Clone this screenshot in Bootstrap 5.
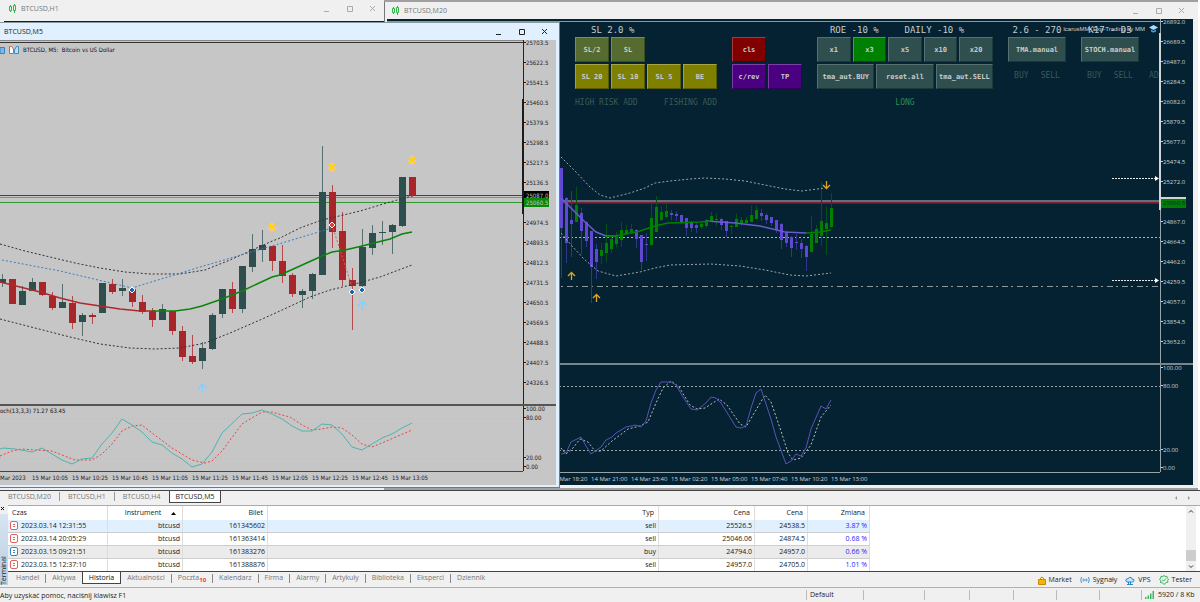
<!DOCTYPE html>
<html lang="pl">

<head>
    <meta charset="UTF-8">
    <meta name="viewport" content="width=device-width, initial-scale=1.0">
    <title>BTCUSD,M5</title>
    <link href="https://cdn.jsdelivr.net/npm/bootstrap@5.3.0/dist/css/bootstrap.min.css" rel="stylesheet">
    <script src="https://cdn.jsdelivr.net/npm/bootstrap@5.3.0/dist/js/bootstrap.bundle.min.js"></script>
    <style>
        body {
            font: 7px/12px "Open Sans", "Noto Sans", sans-serif;
            color: #1c1c1c;
            background: #f0f0f0;
        }

        a { color: inherit; text-decoration: none; }
        button { border: 0; background: none; padding: 0; color: inherit; }
        svg { display: block; }

        /* windows */
        .workspace { background: #a0a0a0; min-height: 0; border-right: 2px solid #fff; }
        .win { position: absolute; background: #f0f0f0; }
        .win-h1 { left: 0; top: 0; width: 384px; bottom: 0; }
        .win-m20 { left: 384px; right: 0; top: 2px; bottom: 2px; border-left: 1px solid #777; padding: 0 5px 3px 2px; }
        .win-m5 { left: 0; top: 22px; width: 560px; bottom: 2px; background: #e0f0ff; padding: 0 3px 2px 0; border-top: 1px solid #8a98a0; border-right: 1px solid #777; border-bottom: 1px solid #777; }
        .win-title { height: 17px; color: #777; padding-left: 4px; }
        .win-title button { width: 23px; height: 17px; color: #aaa; }
        .win-title svg { margin: 0 auto; }
        .win-m5 .win-title, .win-m5 .win-title button { color: #222; }
        .dark-strip { height: 4px; background: #042231; margin-left: 4px; }

        /* charts */
        .chart { background: #c6c6c6; min-height: 0; }
        .chart-dark { background: #042231; color: #d0d4d6; }
        .plot { position: relative; overflow: hidden; min-width: 0; }
        .plot > svg { width: 100%; height: 100%; position: absolute; }
        .axis, .times, .chart-name { font: 6px/6px "DejaVu Sans Condensed", "Liberation Sans", sans-serif; }
        .chart-dark .axis, .chart-dark .times { font-family: "Open Sans", sans-serif; }
        .axis { position: relative; width: 33px; border-left: 1px solid #222; }
        .axis div { height: 20px; white-space: nowrap; }
        .axis div::before { content: ""; display: inline-block; width: 2px; height: 1px; background: currentColor; vertical-align: 2px; }
        .chart-dark .axis { border-color: #9aa3a8; }
        .axis .tag { position: absolute; left: 0; width: 25px; height: 9px; line-height: 9px; padding-left: 2px; color: #c6c6c6; }
        .axis .tag::before { display: none; }
        .range { position: absolute; left: -2px; width: 2px; background: currentColor; }
        .pane-sub { border-top: 2px solid #555; }
        .chart-dark .pane-sub { border-color: #77868c; }
        .m5-sub { height: 67px; }
        .m20-sub { height: 109px; }
        .m5-sub .axis div:nth-child(1) { height: 9px; }
        .m5-sub .axis div:nth-child(2) { height: 40px; }
        .m5-sub .axis div:nth-child(3) { height: 9px; }
        .m5-sub .axis div:nth-child(4) { height: 6px; }
        .m20-sub .axis div:nth-child(1) { height: 18px; }
        .m20-sub .axis div:nth-child(2) { height: 64px; }
        .m20-sub .axis div:nth-child(3) { height: 18px; }
        .m20-sub .axis div:nth-child(4) { height: 6px; }
        .times { height: 14px; overflow: hidden; white-space: nowrap; border-top: 1px solid #444; margin-right: 33px; }
        .times span { flex: 0 0 40px; padding-top: 3px; }
        .chart-dark .times { border-color: #9aa3a8; height: 13px; }
        .m20-times { padding-left: 164px; }
        .m5-times span:first-child { flex-basis: 32px; }
        .chart-name { position: absolute; left: 0; top: 6px; color: #111; }
        .osc-name { position: absolute; left: 0; top: 1px; font: 6px/8px "DejaVu Sans Condensed", "Liberation Sans", sans-serif; color: #111; }

        /* trading panel */
        .panel { position: absolute; top: 4px; right: 5px; gap: 15px; font-family: "DejaVu Sans Mono", monospace; white-space: nowrap; }
        .panel-head { font-size: 9px; height: 14px; line-height: 14px; color: #c8cccc; }
        .panel-row { gap: 2px; margin-bottom: 2px; height: 25px; }
        .panel-row button, .dim { flex: 1 1 0; }
        .panel-row button {
            font-size: 7px;
            font-weight: 700;
            color: #c8cccc;
            background: #2f4f4f;
            border: 1px solid;
            border-color: #55706f #1d3838 #1d3838 #55706f;
        }
        .panel-row .b-sl { background: #556b2f; border-color: #7b8f55 #3c4d20 #3c4d20 #7b8f55; }
        .panel-row .b-olive { background: #808000; border-color: #a3a340 #5a5a00 #5a5a00 #a3a340; }
        .panel-row .b-cls { background: #800000; border-color: #a83a3a #500000 #500000 #a83a3a; }
        .panel-row .b-violet { background: #4b0082; border-color: #7a3fa5 #300058 #300058 #7a3fa5; }
        .panel-row .b-on { background: #008000; border-color: #40a540 #005000 #005000 #40a540; }
        .dim { font-size: 8px; line-height: 23px; color: #3a5a5a; }
        .long { color: #2e8b57; }
        .g-a { width: 142px; }
        .g-b { width: 70px; padding-top: 14px; }
        .g-c { width: 176px; }
        .g-d { width: 58px; }
        .half { width: 70px; }
        .third { width: 34px; }
        .g-f { width: 6px; padding-top: 41px; margin-left: -5px; }
        .expert { position: absolute; top: 6px; right: 2px; font: 6px/8px "Liberation Sans", sans-serif; }

        /* chart tabs */
        .chart-tabs { height: 15px; border-top: 1px solid #444; color: #777; }
        .chart-tabs a { padding: 0 8px; border-right: 1px solid #999; height: 9px; margin-top: 1px; line-height: 9px; }
        .chart-tabs a.now { border: 1px solid #444; border-top: 0; background: #fff; color: #222; height: 12px; margin: 0; padding: 0 6px; line-height: 11px; }
        .chart-tabs a.before-now { border-right: 0; }

        /* terminal */
        .terminal { height: 82px; }
        .side { width: 8px; }
        .side-bar { background: linear-gradient(#b8cee4, #d7e4f1); writing-mode: vertical-rl; transform: rotate(180deg); line-height: 8px; margin-bottom: 2px; }
        .term-body { background: #fff; border-top: 1px solid #aaa; border-bottom: 1px solid #444; overflow: hidden; height: 67px; }
        .deals { width: 862px; table-layout: fixed; border-collapse: separate; border-spacing: 0; color: #222; }
        .deals th, .deals td { height: 13px; padding: 0 2px; line-height: 12px; text-align: right; border-right: 1px solid #ddd; font-weight: 400; white-space: nowrap; vertical-align: middle; }
        .deals th { height: 14px; line-height: 14px; padding: 0 4px; }
        .deals th:nth-child(1), .deals td:nth-child(1) { text-align: left; }
        .deals td:nth-child(1) { padding-left: 2px; }
        .deals td { border-bottom: 1px solid #ccc; }
        .deals th:nth-child(2) { padding-right: 6px; }
        .deals .sel { background: #e0f0ff; }
        .deals .alt { background: #ebebeb; }
        .deals td:last-child { color: #2a1fff; }
        .deals td svg { display: inline-block; vertical-align: -2px; margin-right: 3px; }
        .scroller { width: 10px; background: #f0f0f0; margin-right: 4px; }
        .thumb { height: 11px; width: 10px; background: #cdcdcd; }
        .term-tabs a { padding: 0 6px; border-right: 1px solid #888; line-height: 8px; height: 9px; color: #777; margin-top: 2px; }
        .term-tabs a:last-child, .term-tabs a.before-now { border: 0; }
        .term-tabs a.now { background: #fff; border: 1px solid #444; border-top: 0; height: 12px; margin-top: 0; line-height: 12px; color: #111; }
        .term-tabs sub { color: #f33; font-size: 6px; bottom: -2px; line-height: 0; font-weight: 700; }
        .services { gap: 8px; padding-right: 8px; margin-top: 2px; }
        .services a { gap: 3px; }
        .status { height: 15px; border-top: 1px solid #b0b0b0; line-height: 15px; }
        .status div + div { border-left: 1px solid #bbb; margin: 2px 0; line-height: 10px; padding-left: 3px; }
    </style>
</head>

<body class="vh-100 d-flex flex-column overflow-hidden">

    <main class="workspace position-relative flex-grow-1 overflow-hidden">

        <section class="win win-h1">
            <div class="win-title d-flex align-items-center">
                <svg class="mx-0 me-1 ms-1" width="9" height="9" viewBox="0 0 9 9" fill="none" stroke="#2db84b"><path d="M1.500 2.500h2v4h-2zM2.500 1v1.500M2.500 6.500V8M5.500 1.500h2v5h-2zM6.500 0v1.500M6.500 6.500V9" /></svg>
                <span class="me-auto">BTCUSD,H1</span>
                <button aria-label="Minimalizuj"><svg width="7" height="7" stroke="currentColor"><path d="M1 6.500h5" /></svg></button>
                <button aria-label="Maksymalizuj"><svg width="7" height="7" fill="none" stroke="currentColor"><path d="M1.500 1.500h5v5h-5z" /></svg></button>
                <button aria-label="Zamknij"><svg width="7" height="7" stroke="currentColor"><path d="M1 1l5 5M6 1L1 6" /></svg></button>
            </div>
            <div class="dark-strip mt-1"></div>
        </section>

        <section class="win win-m20 d-flex flex-column">
            <div class="win-title d-flex align-items-center">
                <svg class="mx-0 me-1" width="9" height="9" viewBox="0 0 9 9" fill="none" stroke="#2db84b"><path d="M1.500 2.500h2v4h-2zM2.500 1v1.500M2.500 6.500V8M5.500 1.500h2v5h-2zM6.500 0v1.500M6.500 6.500V9" /></svg>
                <span class="me-auto">BTCUSD,M20</span>
                <button aria-label="Minimalizuj"><svg width="7" height="7" stroke="currentColor"><path d="M1 6.500h5" /></svg></button>
                <button aria-label="Maksymalizuj"><svg width="7" height="7" fill="none" stroke="currentColor"><path d="M1.500 1.500h5v5h-5z" /></svg></button>
                <button aria-label="Zamknij"><svg width="7" height="7" stroke="currentColor"><path d="M1 1l5 5M6 1L1 6" /></svg></button>
            </div>
            <div class="chart chart-dark d-flex flex-column flex-grow-1">
                <div class="d-flex flex-grow-1">
                    <div class="plot flex-grow-1">
                        <svg>
                            <g transform="translate(-387 -19)" fill="none">
                                <path d="M387 21.500H3000" stroke="#8b989d" />
                                <path d="M387 201H3000" stroke="#5f7080" stroke-width="2" />
                                <path d="M387 202.500H3000" stroke="#7a2030" />
                                <path d="M387 203.500H3000" stroke="#0a4a1a" />
                                <path d="M387 237.500H3000" stroke="#aeb6ba" stroke-dasharray="2 2" />
                                <path d="M387 286.500H3000" stroke="#8e999e" stroke-dasharray="6 3 2 4" />
                                <path d="M1112 178.500H1156M1112 280.500H1156" stroke="#e8e8e8" stroke-dasharray="2 1" />
                                <path d="M1155 176l4 2.500-4 2.500zM1155 278l4 2.500-4 2.500z" fill="#fff" />
                                <g id="m20-candles"></g>
                                <path d="M561 157L575 171 590 187 600 195 610 198 630 193 645 188 655 183 670 181 690 179 705 178 725 179 745 181 765 185 785 189 802 191 825 188M561 233L572 246 584 259 598 271 616 276 640 272 655 268 670 265 711 264 740 266 765 270 790 275 806 276 831 273" stroke="#9ba5aa" stroke-dasharray="2 2" />
                                <path d="M561 198L573 210 585 222 596 232 606 236 616 236M706 221L735 223 760 226 785 232 806 233" stroke="#6a5acd" stroke-width="1.500" />
                                <path d="M606 237L621 235 640 231 655 226 668 223 700 222 711 221M806 233L820 232 831 230" stroke="#008000" stroke-width="1.500" />
                                <path d="M571.500 280v-7M568 276l3.500-3.500 3.500 3.500M596.500 302v-7M593 298l3.500-3.500 3.500 3.500M826.500 181v7M823 185l3.500 3.500 3.500-3.500" stroke="#daa520" stroke-width="1.300" />
                            </g>
                        </svg>
                        <div class="expert d-flex">
                            <span>IcarusMM_Exp-Trading by MM</span>
                            <svg class="ms-1" width="9" height="8"><path d="M0 2.500L4.500 0 9 2.500 4.500 5z" fill="#a8dcff" /><path d="M2 4.500v2q2.500 2 5 0v-2L4.500 6z" fill="#3fa0e0" /></svg>
                        </div>
                        <div class="panel d-flex">
                            <div class="g-a">
                                <div class="panel-head ps-3">SL 2.0 %</div>
                                <div class="panel-row d-flex half"><button class="b-sl">SL/2</button><button class="b-sl">SL</button></div>
                                <div class="panel-row d-flex"><button class="b-olive">SL 20</button><button class="b-olive">SL 10</button><button class="b-olive">SL 5</button><button class="b-olive">BE</button></div>
                                <div class="dim d-flex justify-content-between"><span>HIGH RISK ADD</span><span>FISHING ADD</span></div>
                            </div>
                            <div class="g-b">
                                <div class="panel-row d-flex third"><button class="b-cls">cls</button></div>
                                <div class="panel-row d-flex"><button class="b-violet">c/rev</button><button class="b-violet">TP</button></div>
                            </div>
                            <div class="g-c">
                                <div class="panel-head d-flex justify-content-around"><span>ROE -10 %</span><span class="me-3">DAILY -10 %</span></div>
                                <div class="panel-row d-flex"><button>x1</button><button class="b-on">x3</button><button>x5</button><button>x10</button><button>x20</button></div>
                                <div class="panel-row d-flex"><button>tma_aut.BUY</button><button>reset.all</button><button>tma_aut.SELL</button></div>
                                <div class="dim long text-center">LONG</div>
                            </div>
                            <div class="g-d">
                                <div class="panel-head text-center">2.6 - 270</div>
                                <div class="panel-row d-flex"><button>TMA.manual</button></div>
                                <div class="dim d-flex justify-content-around"><span>BUY</span><span>SELL</span></div>
                            </div>
                            <div class="g-d">
                                <div class="panel-head text-center">K17 - D3</div>
                                <div class="panel-row d-flex"><button>STOCH.manual</button></div>
                                <div class="dim d-flex justify-content-around"><span>BUY</span><span>SELL</span></div>
                            </div>
                            <div class="g-f dim overflow-visible">ADD</div>
                        </div>
                    </div>
                    <div class="axis flex-shrink-0" id="m20-axis">
                        <span class="range" style="top: 14px; height: 177px"></span>
                    </div>
                </div>
                <div class="pane-sub m20-sub d-flex">
                    <div class="plot flex-grow-1">
                        <svg>
                            <g transform="translate(-387 -365)" fill="none">
                                <path d="M387 386.500H3000M387 450.500H3000" stroke="#9ba5aa" stroke-dasharray="2 2" />
                                <path d="M561 448L566 454 573 448 580 439 588 442 595 451 601 451 612 441 628 429 640 426 648 422 656 403 663 388 671 381 679 387 690 405 697 409 705 408 719 399 727 405 740 424 746 427 756 410 765 395 771 402 781 431 788 453 793 460 801 458 811 445 821 417 831 405" stroke="#b8bec2" stroke-dasharray="2 2" />
                                <path d="M561 454L566 453 571 442 581 437 586 446 591 454 601 447 606 440 612 437 616 433 626 427 636 425 641 427 646 421 651 403 656 390 661 382 671 382 676 385 683 397 691 409 697 410 706 403 711 397 716 398 721 403 736 427 741 428 746 426 751 408 756 393 761 389 771 419 776 437 786 464 791 461 796 454 801 456 806 448 811 429 821 406 826 409 831 400" stroke="#5a52b5" />
                            </g>
                        </svg>
                    </div>
                    <div class="axis flex-shrink-0">
                        <div>100.00</div>
                        <div>80.00</div>
                        <div>20.00</div>
                        <div>0.00</div>
                    </div>
                </div>
                <div class="times m20-times d-flex" id="m20-times"></div>
            </div>
        </section>

        <section class="win win-m5 d-flex flex-column">
            <div class="win-title d-flex align-items-center">
                <span class="me-auto">BTCUSD,M5</span>
                <button aria-label="Minimalizuj"><svg width="7" height="7" stroke="currentColor"><path d="M1 6.500h5" /></svg></button>
                <button aria-label="Maksymalizuj"><svg width="7" height="7" fill="none" stroke="currentColor"><path d="M1.500 1.500h5v5h-5z" /></svg></button>
                <button aria-label="Zamknij"><svg width="7" height="7" stroke="currentColor"><path d="M1 1l5 5M6 1L1 6" /></svg></button>
            </div>
            <div class="chart d-flex flex-column flex-grow-1">
                <div class="d-flex flex-grow-1">
                    <div class="plot flex-grow-1">
                        <svg>
                            <g transform="translate(0 -40)" fill="none">
                                <path d="M0 40.500H900" stroke="#888" />
                                <path d="M0 42.500H900" stroke="#333" />
                                <path d="M0 195.500H900" stroke="#444" />
                                <path d="M0 197.500H900" stroke="#c9707c" />
                                <path d="M0 202.500H900" stroke="#2f9a2f" />
                                <g id="m5-candles"></g>
                                <path d="M0 244L25 251 50 257 75 263 100 268 125 272 150 274 180 274 205 270 230 260 250 251 270 242 280 238 300 228 322 220 335 217 360 211 390 202 412 196M0 319L35 328 70 337 100 344 130 348 155 349 180 348 205 343 230 333 260 320 280 311 310 297 330 290 355 284 380 277 412 265" stroke="#333" stroke-dasharray="2 2" />
                                <path d="M2 260L60 271 132 288 200 267 282 243 332 228" stroke="#3b7dbb" stroke-dasharray="2 2" />
                                <path d="M332 225L352 287" stroke="#e0593f" stroke-dasharray="2 2" />
                                <path d="M0 282L20 287 40 292 60 298 80 303 100 306 120 309 140 311 155 311" stroke="#b0282c" stroke-width="1.500" />
                                <path d="M152 311L175 311 190 309 202 306 222 299 242 291 272 277 280 275 300 266 322 256 332 252 345 250 362 246 390 239 402 234 412 232" stroke="#0a850a" stroke-width="1.500" />
                                <g id="m5-marks"></g>
                                <path d="M202.500 393v-9M198 388.500l4.500-4.500 4.500 4.500M362.500 310v-9M358 305.500l4.500-4.500 4.500 4.500" stroke="#87cefa" stroke-width="1.300" />
                            </g>
                        </svg>
                        <div class="chart-name d-flex align-items-center">
                            <svg class="me-1" width="5" height="7"><path d="M0 .5h4.500v6H0z" fill="#7bb8e6" stroke="#3c82b8" /></svg>
                            <svg class="me-1" width="10" height="8" fill="#fff"><path d="M.5.5h2l2 2.500v4.500h-4z" stroke="#e0594f" /><path d="M9.500.5h-2L5.500 4v3.500h4z" stroke="#3c8cc8" fill="#bfe0f8" /></svg>
                            <span>BTCUSD, M5:&nbsp; Bitcoin vs US Dollar</span>
                        </div>
                    </div>
                    <div class="axis flex-shrink-0" id="m5-axis">
                        <span class="range" style="top: 59px; height: 115px"></span>
                        <div class="tag bg-black" style="top: 151px">25087.0</div>
                        <div class="tag" style="top: 158px; background: #088a08">25060.5</div>
                    </div>
                </div>
                <div class="pane-sub m5-sub d-flex">
                    <div class="plot flex-grow-1">
                        <svg>
                            <g transform="translate(0 -406)" fill="none">
                                <path d="M0 418.500H900M0 458.500H900" stroke="#bababa" stroke-dasharray="1 3" />
                                <path d="M0 456L12 451 22 449 35 450 52 451 62 455 75 460 92 460 102 454 112 444 122 431 132 426 142 425 152 433 172 448 192 460 205 463 212 461 222 451 242 424 262 412 272 412 282 415 290 417 302 425 312 430 322 429 332 427 342 428 352 435 362 444 372 447 382 443 412 430" stroke="#f04040" stroke-dasharray="2 2" />
                                <path d="M0 449L3 448 15 449 32 452 42 448 52 454 62 460 72 464 82 459 92 458 102 444 112 433 122 419 132 425 142 432 152 442 162 445 172 453 182 459 192 467 202 464 212 452 222 433 242 414 252 413 262 410 272 414 282 419 292 426 302 431 312 431 322 424 332 425 342 434 352 447 362 450 372 444 382 438 392 434 402 428 412 423" stroke="#4fb3ad" />
                            </g>
                        </svg>
                        <div class="osc-name">och(13,3,3) 71.27 63.45</div>
                    </div>
                    <div class="axis flex-shrink-0">
                        <div>100.00</div>
                        <div>80.00</div>
                        <div>20.00</div>
                        <div>0.00</div>
                    </div>
                </div>
                <div class="times m5-times d-flex" id="m5-times"></div>
            </div>
        </section>
    </main>

    <nav class="chart-tabs d-flex">
        <a href="#">BTCUSD,M20</a>
        <a href="#">BTCUSD,H1</a>
        <a href="#" class="before-now">BTCUSD,H4</a>
        <a href="#" class="now me-auto">BTCUSD,M5</a>
        <svg class="me-2 mt-1" width="18" height="5" fill="#999"><path d="M3 1v4L1 3zM14 1v4l2-2z" /></svg>
    </nav>

    <section class="terminal d-flex">
        <div class="side d-flex flex-column">
            <button aria-label="Zamknij"><svg width="7" height="9" stroke="#111"><path d="M1 2l3 3M4 2L1 5" /></svg></button>
            <div class="side-bar flex-grow-1">Terminal</div>
        </div>
        <div class="flex-grow-1">
            <div class="term-body d-flex">
                <div class="flex-grow-1 overflow-hidden">
                    <table class="deals">
                        <colgroup>
                            <col style="width: 100px">
                            <col style="width: 75px">
                            <col style="width: 85px">
                            <col style="width: 391px">
                            <col style="width: 96px">
                            <col style="width: 53px">
                            <col style="width: 62px">
                        </colgroup>
                        <thead>
                            <tr>
                                <th>Czas</th>
                                <th>Instrument <svg class="d-inline-block ms-2 align-middle" width="5" height="5"><path d="M0 4l2.500-3L5 4z" /></svg></th>
                                <th>Bilet</th>
                                <th>Typ</th>
                                <th>Cena</th>
                                <th>Cena</th>
                                <th>Zmiana</th>
                            </tr>
                        </thead>
                        <tbody id="deals"></tbody>
                    </table>
                </div>
                <div class="scroller d-flex flex-column justify-content-between">
                    <button aria-label="W górę"><svg width="10" height="10" fill="none" stroke="#333"><path d="M3 6.500l2-2 2 2" /></svg></button>
                    <div class="thumb mt-auto"></div>
                    <button aria-label="W dół"><svg width="10" height="10" fill="none" stroke="#333"><path d="M3 4.500l2 2 2-2" /></svg></button>
                </div>
            </div>
            <div class="d-flex">
                <nav class="term-tabs d-flex ps-1 me-auto">
                    <a href="#" class="ps-1">Handel</a>
                    <a href="#" class="before-now">Aktywa</a>
                    <a href="#" class="now">Historia</a>
                    <a href="#">Aktualności</a>
                    <a href="#">Poczta<sub>10</sub></a>
                    <a href="#">Kalendarz</a>
                    <a href="#">Firma</a>
                    <a href="#">Alarmy</a>
                    <a href="#">Artykuły</a>
                    <a href="#">Biblioteka</a>
                    <a href="#">Eksperci</a>
                    <a href="#">Dziennik</a>
                </nav>
                <nav class="services d-flex">
                    <a href="#" class="d-flex align-items-center"><svg width="8" height="9"><path d="M.5 3.500h7v5h-7z" fill="#f5b400" stroke="#c98a00" /><path d="M2.500 4V2q1.500-2 3 0v2" fill="none" stroke="#c98a00" /></svg>Market</a>
                    <a href="#" class="d-flex align-items-center"><svg width="10" height="8" fill="none" stroke="#3f97cf"><path d="M1.500 1Q0 4 1.500 7M3.500 2.500Q2.500 4 3.500 5.500M8.500 1Q10 4 8.500 7M6.500 2.500Q7.500 4 6.500 5.500" /><circle cx="5" cy="4" r=".5" /></svg>Sygnały</a>
                    <a href="#" class="d-flex align-items-center"><svg width="10" height="9" fill="#c9e6fa" stroke="#2c84c0"><path d="M2 6Q0 5 1 3.500 2 2.500 3 3 4 .5 6 1.500 7 2 7 3 9.500 3 9 5 8.500 6 7.500 6z" /><path d="M3.500 6v2.500M5.500 6v2.500M2 8.500h6" fill="none" /></svg>VPS</a>
                    <a href="#" class="d-flex align-items-center"><svg width="10" height="10" fill="none" stroke="#35b35a"><path d="M5 .5l1.200 1 1.700-.2.400 1.700 1.200 1-.8 1.500.2 1.700-1.700.4L5 9.500 3.500 7.800l-2-.3.3-1.800L.5 4.500 1.700 3l.3-1.600 1.800.1z" /><path d="M3 4.500l1.500 1.700L7 3.500" /></svg>Tester</a>
                </nav>
            </div>
        </div>
    </section>

    <footer class="status d-flex flex-shrink-0">
        <div class="me-auto">Aby uzyskać pomoc, naciśnij klawisz F1</div>
        <div style="width: 57px">Default</div>
        <div style="width: 61px"></div>
        <div style="width: 45px"></div>
        <div style="width: 44px"></div>
        <div style="width: 43px"></div>
        <div style="width: 43px"></div>
        <div style="width: 42px"></div>
        <div class="d-flex align-items-center text-nowrap" style="width: 59px"><svg class="me-1 flex-shrink-0" width="9" height="8" fill="#3cb95c"><path d="M0 6h1.500v2H0zM2.500 4.500H4V8H2.500zM5 2.500h1.500V8H5zM7.500 0H9v8H7.500z" /></svg>5920 / 8 Kb</div>
    </footer>

    <script>
        // high, body top, body bottom, low, direction
        const m5 = [
            [274, 279, 283, 287, 1], [279, 279, 304, 304, 0], [286, 291, 305, 305, 1], [278, 282, 291, 291, 1],
            [282, 282, 295, 296, 0], [292, 296, 308, 310, 0], [284, 302, 308, 308, 1], [296, 303, 323, 329, 0],
            [313, 315, 322, 336, 1], [313, 315, 317, 324, 0], [283, 283, 313, 313, 1], [279, 284, 292, 294, 0],
            [279, 288, 291, 296, 1], [287, 289, 302, 307, 0], [295, 302, 312, 314, 0], [308, 311, 320, 327, 0],
            [304, 309, 320, 320, 1], [311, 311, 331, 335, 0], [326, 331, 357, 361, 0], [335, 356, 362, 364, 0],
            [342, 348, 361, 369, 1], [313, 315, 349, 350, 1], [289, 289, 314, 318, 1], [282, 289, 309, 313, 0],
            [266, 266, 309, 313, 1], [234, 249, 267, 272, 1], [230, 245, 250, 262, 1], [246, 246, 261, 271, 0],
            [245, 261, 276, 283, 0], [273, 275, 294, 297, 0], [289, 291, 295, 308, 1], [273, 274, 291, 299, 1],
            [146, 192, 275, 275, 1], [185, 192, 232, 248, 0], [212, 231, 280, 286, 0], [268, 280, 286, 330, 0],
            [229, 247, 286, 288, 1], [225, 233, 248, 255, 1], [221, 232, 233, 245, 1], [224, 225, 232, 254, 1],
            [177, 177, 226, 227, 1], [177, 177, 195, 197, 0]
        ];
        const m20 = [
            [168, 168, 228, 278, 0], [197, 198, 243, 263, 0], [191, 220, 224, 257, 0], [187, 205, 222, 222, 1],
            [208, 213, 231, 254, 0], [221, 222, 241, 247, 0], [231, 231, 267, 303, 0], [244, 249, 262, 279, 0],
            [243, 250, 256, 264, 1], [224, 243, 253, 262, 1], [235, 239, 249, 253, 1], [232, 235, 244, 247, 1],
            [222, 230, 240, 247, 1], [225, 230, 234, 235, 1], [224, 229, 232, 234, 1], [229, 230, 239, 248, 0],
            [235, 235, 262, 270, 0], [233, 244, 245, 261, 0], [204, 218, 245, 245, 1], [196, 207, 232, 232, 1],
            [206, 212, 220, 221, 1], [203, 211, 217, 218, 1], [210, 213, 215, 220, 0], [211, 214, 216, 221, 0],
            [215, 215, 223, 224, 0], [218, 218, 228, 236, 0], [221, 222, 228, 232, 0], [223, 225, 228, 233, 0],
            [223, 224, 227, 229, 1], [219, 220, 226, 228, 1], [212, 216, 221, 222, 1], [214, 219, 220, 226, 1],
            [218, 219, 225, 230, 0], [221, 221, 231, 237, 0], [225, 226, 227, 234, 1], [214, 219, 227, 227, 1],
            [217, 220, 223, 226, 1], [217, 220, 223, 224, 1], [206, 215, 222, 222, 1], [206, 210, 219, 219, 1],
            [209, 213, 216, 221, 0], [213, 215, 220, 224, 0], [217, 217, 223, 226, 0], [220, 220, 230, 233, 0],
            [223, 224, 240, 249, 0], [230, 232, 243, 247, 0], [236, 237, 248, 257, 0], [234, 242, 243, 250, 0],
            [239, 243, 249, 258, 0], [245, 246, 257, 271, 0], [216, 234, 252, 252, 1], [225, 229, 243, 243, 1],
            [182, 221, 236, 246, 1], [207, 223, 229, 255, 1], [193, 208, 227, 228, 1]
        ];

        function candles(id, data, start, step, width, body, wick) {
            let out = "";
            data.forEach(([high, top, bottom, low, up], i) => {
                const x = start + i * step;
                out += `<rect x="${x}" y="${high}" width="1" height="${low - high}" fill="${wick[up]}"/>`;
                out += `<rect x="${x - (width - 1) / 2}" y="${top}" width="${width}" height="${bottom - top}" fill="${body[up]}"/>`;
            });
            document.getElementById(id).innerHTML = out;
        }
        candles("m5-candles", m5, 2, 10, 7, ["#a8262a", "#2f4f4f"], ["#b5484b", "#55706f"]);
        candles("m20-candles", m20, 561, 5, 3, ["#6048d4", "#008000"], ["#33348c", "#064f16"]);

        // signal stars and deal markers
        let marks = "";
        [[272, 227], [332, 167], [412, 160]].forEach(([x, y]) => {
            marks += `<path d="M${x - 5} ${y + 1}l3-1h4l3 1-5 4zM${x} ${y - 5}l2 3h-4z" fill="#ffc0b0"/>`;
            marks += `<path d="M${x - 3} ${y - 3}l6 6M${x + 3} ${y - 3}l-6 6" stroke="#ffd700" stroke-width="2"/>`;
        });
        [[132, 290, "#1565b8"], [332, 225, "#e0402a"], [352, 292, "#1565b8"], [362, 290, "#1565b8"]].forEach(([x, y, color]) => {
            marks += `<path d="M${x - 3} ${y}l3-3 3 3-3 3z" fill="${color}" stroke="#fff"/>`;
        });
        document.getElementById("m5-marks").innerHTML = marks;

        function priceAxis(id, first, step, count, skip) {
            let out = "";
            for (let i = 0; i < count; i++) {
                out += i === skip ? "<div class='invisible'></div>" : `<div>${(first - i * step).toFixed(1)}</div>`;
            }
            document.getElementById(id).insertAdjacentHTML("beforeend", out);
        }
        priceAxis("m5-axis", 25703.5, 81, 18, 8);
        priceAxis("m20-axis", 26892, 202.5, 17, 9);
        document.getElementById("m20-axis").insertAdjacentHTML("beforeend",
            `<div class="tag" style="top: 178px; background: #d3d3d3"></div>
             <div class="tag" style="top: 180px; background: #008000; color: #042231">25060.5</div>`);

        const times = (id, list) => {
            document.getElementById(id).innerHTML = list.map(t => `<span>${t}</span>`).join("");
        };
        times("m5-times", ["Mar 2023", "15 Mar 10:05", "15 Mar 10:25", "15 Mar 10:45", "15 Mar 11:05", "15 Mar 11:25",
            "15 Mar 11:45", "15 Mar 12:05", "15 Mar 12:25", "15 Mar 12:45", "15 Mar 13:05"]);
        times("m20-times", ["14 Mar 18:20", "14 Mar 21:00", "14 Mar 23:40", "15 Mar 02:20", "15 Mar 05:00",
            "15 Mar 07:40", "15 Mar 10:20", "15 Mar 13:00"]);

        const deals = [
            ["2023.03.14 12:31:55", "btcusd", "161345602", "sell", "25526.5", "24538.5", "3.87 %"],
            ["2023.03.14 20:05:29", "btcusd", "161363414", "sell", "25046.06", "24874.5", "0.68 %"],
            ["2023.03.15 09:21:51", "btcusd", "161383276", "buy", "24794.0", "24957.0", "0.66 %"],
            ["2023.03.15 12:37:10", "btcusd", "161388876", "sell", "24957.0", "24705.0", "1.01 %"]
        ];
        document.getElementById("deals").innerHTML = deals.map((deal, i) => {
            const color = deal[3] === "buy" ? "#2f86c0" : "#e5605c";
            const icon = `<svg width="8" height="9" fill="#fff" stroke="${color}"><rect x=".5" y=".5" width="7" height="8" rx="1.500"/><path d="M3 3.500h2M3 5.500h2"/></svg>`;
            return `<tr class="${["sel", "", "alt", ""][i]}">` + deal.map((cell, n) => `<td>${n ? "" : icon}${cell}</td>`).join("") + "</tr>";
        }).join("");
    </script>

</body>

</html>
